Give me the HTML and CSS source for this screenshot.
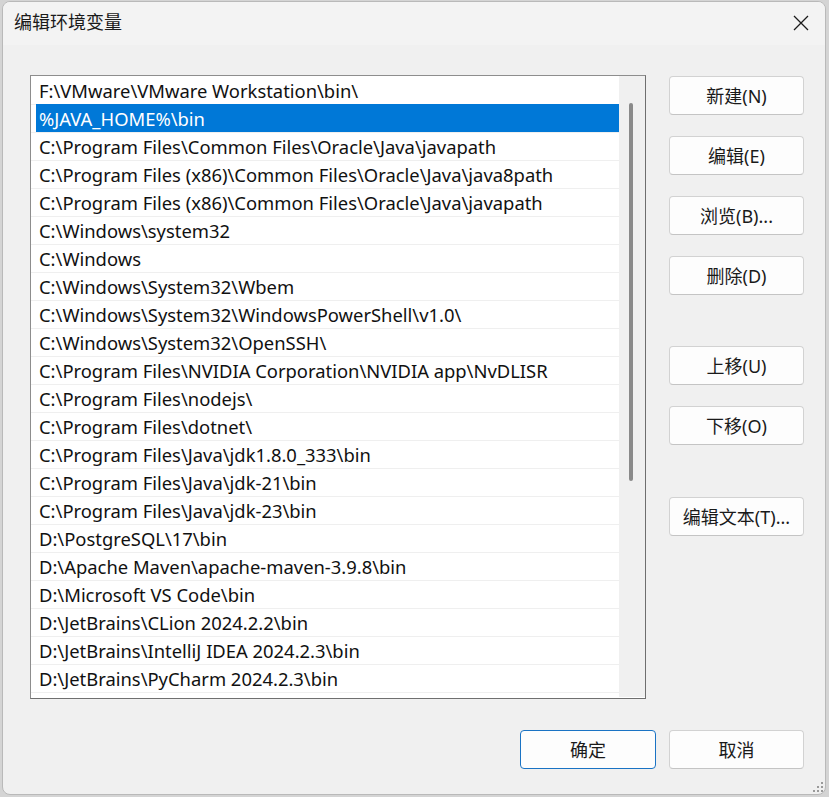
FILE: index.html
```html
<!DOCTYPE html>
<html lang="zh-CN">
<head>
<meta charset="utf-8">
<title>编辑环境变量</title>
<link rel="stylesheet" href="styles.css">
</head>
<body>
<div class="window">
  <div class="titlebar">
    <span class="title">编辑环境变量</span>
    <span class="close" aria-label="关闭">
      <svg width="16" height="16" viewBox="0 0 16 16"><path d="M1 1 L15 15 M15 1 L1 15" stroke="#1b1b1b" stroke-width="1.3" fill="none"/></svg>
    </span>
  </div>
  <div class="content">
    <div class="main">
      <div class="listbox">
        <div class="rows">
          <div class="row"><div class="cell">F:\VMware\VMware Workstation\bin\</div></div>
          <div class="row selected"><div class="cell">%JAVA_HOME%\bin</div></div>
          <div class="row"><div class="cell">C:\Program Files\Common Files\Oracle\Java\javapath</div></div>
          <div class="row"><div class="cell">C:\Program Files (x86)\Common Files\Oracle\Java\java8path</div></div>
          <div class="row"><div class="cell">C:\Program Files (x86)\Common Files\Oracle\Java\javapath</div></div>
          <div class="row"><div class="cell">C:\Windows\system32</div></div>
          <div class="row"><div class="cell">C:\Windows</div></div>
          <div class="row"><div class="cell">C:\Windows\System32\Wbem</div></div>
          <div class="row"><div class="cell">C:\Windows\System32\WindowsPowerShell\v1.0\</div></div>
          <div class="row"><div class="cell">C:\Windows\System32\OpenSSH\</div></div>
          <div class="row"><div class="cell">C:\Program Files\NVIDIA Corporation\NVIDIA app\NvDLISR</div></div>
          <div class="row"><div class="cell">C:\Program Files\nodejs\</div></div>
          <div class="row"><div class="cell">C:\Program Files\dotnet\</div></div>
          <div class="row"><div class="cell">C:\Program Files\Java\jdk1.8.0_333\bin</div></div>
          <div class="row"><div class="cell">C:\Program Files\Java\jdk-21\bin</div></div>
          <div class="row"><div class="cell">C:\Program Files\Java\jdk-23\bin</div></div>
          <div class="row"><div class="cell">D:\PostgreSQL\17\bin</div></div>
          <div class="row"><div class="cell">D:\Apache Maven\apache-maven-3.9.8\bin</div></div>
          <div class="row"><div class="cell">D:\Microsoft VS Code\bin</div></div>
          <div class="row"><div class="cell">D:\JetBrains\CLion 2024.2.2\bin</div></div>
          <div class="row"><div class="cell">D:\JetBrains\IntelliJ IDEA 2024.2.3\bin</div></div>
          <div class="row"><div class="cell">D:\JetBrains\PyCharm 2024.2.3\bin</div></div>
          <div class="row"><div class="cell"></div></div>
        </div>
        <div class="scrollbar"><div class="thumb"></div></div>
      </div>
      <div class="side">
        <div class="group">
          <button class="btn">新建(N)</button>
          <button class="btn">编辑(E)</button>
          <button class="btn">浏览(B)...</button>
          <button class="btn">删除(D)</button>
        </div>
        <div class="group move">
          <button class="btn">上移(U)</button>
          <button class="btn">下移(O)</button>
        </div>
        <div class="group text">
          <button class="btn">编辑文本(T)...</button>
        </div>
      </div>
    </div>
    <div class="footer">
      <button class="btn default">确定</button>
      <button class="btn">取消</button>
    </div>
  </div>
  <div class="grip">
    <i class="d1"></i>
    <i class="d2"></i><i class="d3"></i>
    <i class="d4"></i><i class="d5"></i><i class="d6"></i>
  </div>
</div>
</body>
</html>
```

FILE: styles.css
```css
html, body {
  margin: 0;
  padding: 0;
}
body {
  width: 829px;
  height: 797px;
  overflow: hidden;
  background: #d4d4d4;
  font-family: "Microsoft YaHei UI", "Segoe UI", "Noto Sans", "Noto Sans CJK SC", sans-serif;
  font-size: 18px;
  color: #1a1a1a;
}
.window {
  position: relative;
  box-sizing: border-box;
  margin: 1px 0 0 2px;
  width: 824px;
  height: 794px;
  border: 1px solid #b9b9b9;
  border-radius: 8px;
  background: #f0f0f0;
  display: flex;
  flex-direction: column;
  overflow: hidden;
}
.titlebar {
  height: 43px;
  flex: none;
  background: #f3f3f3;
  display: flex;
  align-items: center;
  justify-content: space-between;
  padding: 0 16px 0 11px;
}
.title {
  font-size: 18px;
  color: #1a1a1a;
  line-height: 1;
  margin-top: -3px;
}
.close {
  display: flex;
  width: 16px;
  height: 16px;
  margin-top: -2px;
}
.content {
  flex: 1;
  display: flex;
  flex-direction: column;
  padding: 30px 21px 0 27px;
}
.main {
  display: flex;
  gap: 23px;
}
.listbox {
  box-sizing: border-box;
  width: 616px;
  height: 624px;
  border: 1px solid #8d8d8d;
  border-right-color: #6f6f6f;
  border-bottom-color: #6f6f6f;
  background: #fff;
  display: flex;
  overflow: hidden;
}
.rows {
  flex: 1;
  height: 621px;
  overflow: hidden;
}
.row {
  box-sizing: border-box;
  height: 28px;
  padding-left: 5px;
  display: flex;
}
.row + .row {
  border-top: 1px solid #efefef;
}
.cell {
  box-sizing: border-box;
  flex: 1;
  padding: 2px 0 0 3px;
  line-height: 26px;
  margin-top: -1px;
  white-space: nowrap;
  font-size: 18.4px;
  color: #111;
}
.row:first-child .cell {
  margin-top: 0;
}
.row.selected .cell {
  background: #0078d7;
  color: #fff;
  height: 28px;
}
.scrollbar {
  width: 26px;
  height: 621px;
  background: #f0f0f0;
  flex: none;
  position: relative;
}
.thumb {
  position: absolute;
  left: 10px;
  top: 27px;
  width: 4px;
  height: 378px;
  border-radius: 2px;
  background: #8a8a8a;
}
.side {
  display: flex;
  flex-direction: column;
  margin-top: 1px;
}
.group {
  display: flex;
  flex-direction: column;
  gap: 21px;
}
.group.move {
  margin-top: 51px;
}
.group.text {
  margin-top: 52px;
}
.btn {
  box-sizing: border-box;
  width: 135px;
  height: 39px;
  border: 1px solid #d2d2d2;
  border-bottom-color: #c4c4c4;
  border-radius: 4px;
  background: #fdfdfd;
  font-family: inherit;
  font-size: 18px;
  color: #1a1a1a;
  padding: 0 0 2px 0;
  cursor: default;
}
.footer {
  display: flex;
  justify-content: flex-end;
  gap: 13px;
  margin-top: 31px;
}
.btn.default {
  width: 136px;
  border: 1px solid #1a73c4;
}
.grip {
  position: absolute;
  right: 2px;
  bottom: 2px;
  width: 10px;
  height: 10px;
}
.grip i {
  position: absolute;
  width: 2px;
  height: 2px;
  background: #9a9a9a;
}
.grip .d1 { right: 0; top: 0; }
.grip .d2 { right: 4px; top: 4px; }
.grip .d3 { right: 0; top: 4px; }
.grip .d4 { right: 8px; top: 8px; }
.grip .d5 { right: 4px; top: 8px; }
.grip .d6 { right: 0; top: 8px; }
```
